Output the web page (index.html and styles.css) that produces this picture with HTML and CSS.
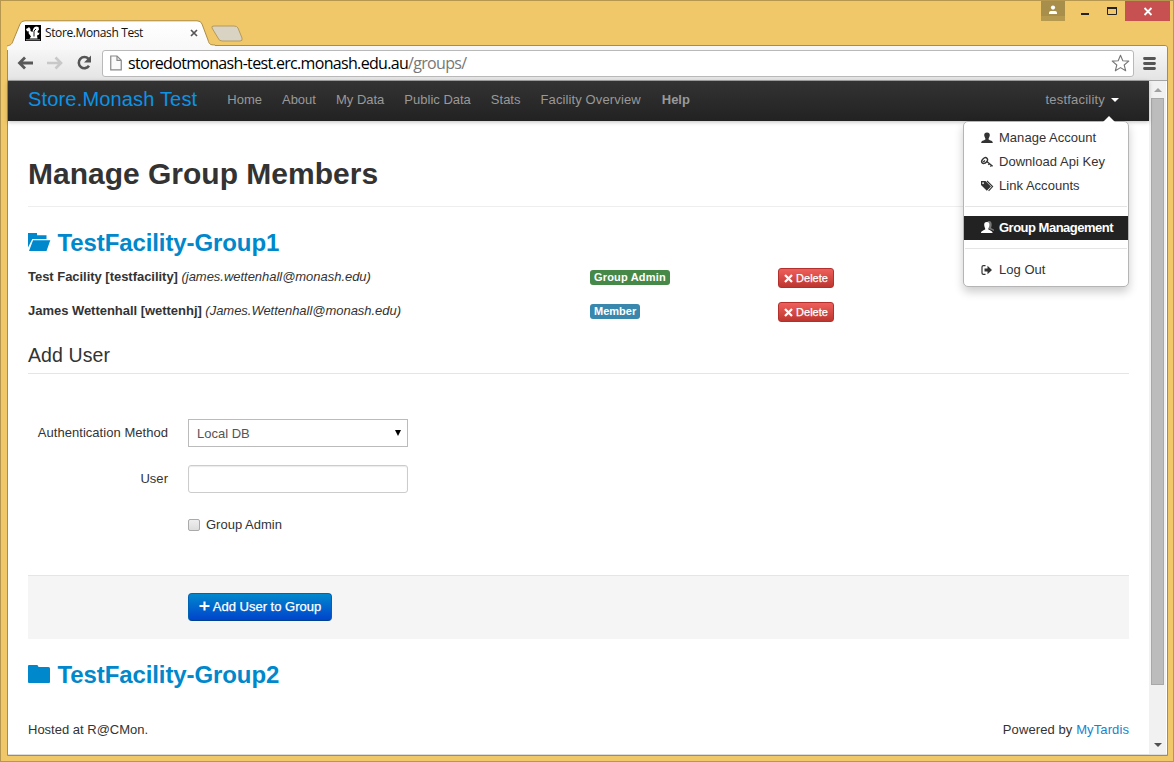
FILE: index.html
```
<!DOCTYPE html>
<html lang="en">
<head>
<meta charset="utf-8">
<title>Store.Monash Test</title>
<link rel="stylesheet" href="styles.css">
</head>
<body>
<div class="window">
  <header class="titlebar">
    <div class="tab">
      <svg class="tab-shape" width="240" height="30" viewBox="0 0 240 30"><defs><linearGradient id="tb" x2="0" y2="1"><stop offset="0" stop-color="#fff"/><stop offset="1" stop-color="#f8f8f8"/></linearGradient></defs><path d="M0 30 V26 C4 25 5 24 6 21 L13 4 Q14 1 18 1 H190 Q194 1 195 4 L201 20 C202 24 203 25 208 25 V30Z" fill="url(#tb)"/><path d="M0 26 C4 25 5 24 6 21 L13 4 Q14 .8 18 .8 H190 Q194 .8 195 4 L201 20 C202 24 203 25 208 25" fill="none" stroke="#ab8d49"/><path d="M207 6 H227 Q230 6 231 8 L235 18 Q236 21 233 21 H215 Q212 21 211 18 L205 8 Q204 6 207 6Z" fill="#d9d3c3" stroke="#b59a5c"/></svg>
      <svg class="favicon" width="16" height="16" viewBox="0 0 16 16"><path d="M0 0H16V16H0Z" fill="#000"/><path d="M1 4 3 3 4 2 5.5 4 5.5 6 7.5 7 8 4.5 9 2.5 11 1.5 13.5 2 14 4.5 12.5 6.5 13 8 14.5 7.5 14 9.5 12 10.5 12.5 13.5H4.5L6 11.5 4.5 9.5 3.5 8 4 6.5 2 6.3Z" fill="#fff"/><path d="M9 11.5V6L11 4" fill="none" stroke="#000" stroke-width=".9"/><path d="M1 14.8H15" stroke="#ccc" stroke-width=".8"/></svg>
      <span class="tab-title">Store.Monash Test</span>
      <svg class="tab-close" width="8" height="8" viewBox="0 0 8 8"><path d="M1 1 7 7M7 1 1 7" stroke="#555" stroke-width="1.7"/></svg>
    </div>
    <div class="controls">
      <span class="profile"><svg width="10" height="10" viewBox="0 0 10 10"><circle cx="5" cy="2.6" r="2.1" fill="#fff"/><path d="M1 9V7.8Q1 6 3 6H7Q9 6 9 7.8V9Z" fill="#fff"/></svg></span>
      <svg class="win-icons" width="60" height="20" viewBox="0 0 60 20"><path d="M16 13H24" stroke="#222" stroke-width="2"/><path d="M42.5 7H51.5V13.5H42.5Z" fill="none" stroke="#222"/><path d="M42 7H52" stroke="#222" stroke-width="2"/></svg>
      <span class="win-close"><svg width="10" height="9" viewBox="0 0 10 9"><path d="M1.5 1 8.5 8M8.5 1 1.5 8" stroke="#fff" stroke-width="1.8"/></svg></span>
    </div>
  </header>

  <div class="frame">
    <div class="toolbar">
      <svg class="tool-icons" width="94" height="35" viewBox="0 0 94 35"><path d="M11.5 17H25M17 11.5 11.5 17 17 22.5" fill="none" stroke="#585858" stroke-width="2.8"/><path d="M39 17H52.5M47.5 11.5 53 17 47.5 22.5" fill="none" stroke="#c8c8c8" stroke-width="2.6"/><path d="M80.5 12.8A5.6 5.6 0 1 0 81 19.8" fill="none" stroke="#555" stroke-width="2.6"/><path d="M83 9.5V16.5H76Z" fill="#555"/></svg>
      <div class="omnibox">
        <svg width="12" height="16" viewBox="0 0 12 16"><path d="M.75 1H7L11.25 5.3V14.9H.75Z" fill="#fafafa" stroke="#888" stroke-width="1.2"/><path d="M7 1V5.3H11" fill="none" stroke="#888" stroke-width="1.2"/></svg>
        <span class="url">storedotmonash-test.erc.monash.edu.au<span class="path">/groups/</span></span>
        <svg class="star" width="19" height="18" viewBox="0 0 19 18"><path d="M9.5 1.2 11.8 6.7 17.8 7.1 13.2 11 14.7 16.8 9.5 13.6 4.3 16.8 5.8 11 1.2 7.1 7.2 6.7Z" fill="#fff" stroke="#777" stroke-width="1.1" stroke-linejoin="round"/></svg>
      </div>
      <svg class="menu-icon" width="13" height="13" viewBox="0 0 13 13"><path d="M1.5 1.5H11.5M1.5 6.5H11.5M1.5 11.5H11.5" stroke="#555" stroke-width="2.8" stroke-linecap="round"/></svg>
    </div>

    <div class="viewport">
      <div class="page">
        <nav class="navbar">
          <a class="brand">Store.Monash Test</a>
          <a>Home</a><a>About</a><a>My Data</a><a>Public Data</a><a>Stats</a><a class="wide">Facility Overview</a><a class="strong">Help</a>
          <div class="account"><span>testfacility</span><i class="caret"></i>
            <div class="dropdown">
              <div class="item"><svg width="14" height="14" viewBox="0 0 14 14"><path d="M7 1.5C5 1.5 4.1 2.8 4.2 4.3 4.3 5.8 5.3 7 5.5 8 5.5 9.5 1.2 9 1.2 12H12.8C12.8 9 8.5 9.5 8.5 8 8.7 7 9.7 5.8 9.8 4.3 9.9 2.8 9 1.5 7 1.5Z" fill="#333"/></svg>Manage Account</div>
              <div class="item"><svg width="14" height="14" viewBox="0 0 14 14"><ellipse cx="4.6" cy="5.6" rx="3.3" ry="2.3" transform="rotate(-45 4.6 5.6)" fill="none" stroke="#333" stroke-width="1.4"/><path d="M3.2 7 5 5.4M6.8 6.5 12.6 11.3M9.3 8.6 8.3 9.8M11.3 10.2 10.3 11.5" fill="none" stroke="#333" stroke-width="1.4"/></svg>Download Api Key</div>
              <div class="item"><svg width="14" height="14" viewBox="0 0 14 14"><path d="M1 2H5.5L11 7.5 6.8 11.8 1 6ZM3 3.2A.9.9 0 1 0 3.1 3.2Z" fill="#333" fill-rule="evenodd"/><path d="M7 2 12.6 7.6 8.6 11.8" fill="none" stroke="#333" stroke-width="1.1"/></svg>Link Accounts</div>
              <div class="divider"></div>
              <div class="item active"><svg width="14" height="14" viewBox="0 0 14 14"><path d="M9 0C7 0 7 2 7.2 4L9 8 14 10V8.5L11 7C12 5 12.4 0 9 0Z" fill="#777"/><path d="M6.8 1C4.8 1 4.1 2.3 4.2 4 4.3 5.6 5.1 7 5.3 8 5.3 9.3 1 9.3 1 12H12.6C12.6 9.3 8.3 9.3 8.3 8 8.5 7 9.3 5.6 9.4 4 9.5 2.3 8.8 1 6.8 1Z" fill="#fff"/></svg>Group Management</div>
              <div class="divider"></div>
              <div class="item"><svg width="14" height="14" viewBox="0 0 14 14"><path d="M5.5 2.6H3.5Q2 2.6 2 4V10Q2 11.4 3.5 11.4H5.5" fill="none" stroke="#333" stroke-width="1.2"/><path d="M4.5 5.5H7.5V2.7L12 7 7.5 11.3V8.5H4.5Z" fill="#333"/></svg>Log Out</div>
            </div>
          </div>
        </nav>
        <main>
          <h1>Manage Group Members</h1>
          <h2><svg width="23" height="20" viewBox="0 0 23 20"><path d="M0 1H9V3.3H18.5V7H4.3L0 15.5Z" fill="#08c"/><path d="M5 8.2H22.3L18.5 19H1Z" fill="#08c"/></svg>TestFacility-Group1</h2>
          <div class="member"><div class="who"><b>Test Facility [testfacility]</b> <i>(james.wettenhall@monash.edu)</i></div><div class="role"><span class="label admin">Group Admin</span></div><button class="delete"><svg width="9" height="9" viewBox="0 0 9 9"><path d="M1 1 8 8M8 1 1 8" stroke="#fff" stroke-width="2.3"/></svg>Delete</button></div>
          <div class="member"><div class="who"><b>James Wettenhall [wettenhj]</b> <i>(James.Wettenhall@monash.edu)</i></div><div class="role"><span class="label">Member</span></div><button class="delete"><svg width="9" height="9" viewBox="0 0 9 9"><path d="M1 1 8 8M8 1 1 8" stroke="#fff" stroke-width="2.3"/></svg>Delete</button></div>
          <h3>Add User</h3>
          <div class="form">
            <div class="field"><label>Authentication Method</label><div class="control select"><span>Local DB</span><svg width="8" height="7" viewBox="0 0 8 7"><path d="M1 0H7L4 6Z" fill="#000"/></svg></div></div>
            <div class="field"><label>User</label><div class="control"></div></div>
            <div class="check"><span class="box"></span>Group Admin</div>
          </div>
          <div class="actions"><button class="primary"><svg width="11" height="11" viewBox="0 0 11 11"><path d="M5.5 .5V9.5M.5 5H10.5" stroke="#fff" stroke-width="2.1"/></svg>Add User to Group</button></div>
          <h2 class="second"><svg width="23" height="20" viewBox="0 0 23 20"><path d="M0 2Q0 1 1 1H9Q10 1 10.5 3H20.5Q22 3 22 4.5V18Q22 19 21 19H1Q0 19 0 18Z" fill="#08c"/></svg>TestFacility-Group2</h2>
        </main>
        <footer><span>Hosted at R@CMon.</span><span class="powered">Powered by <a>MyTardis</a></span></footer>
      </div>
      <div class="scrollbar"><i class="arrow up"></i><div class="thumb"></div><i class="arrow down"></i></div>
    </div>
  </div>
</div>
</body>
</html>
```
FILE: styles.css
```
* { box-sizing: border-box; }
body { margin: 0; color: #333; font: 13px/20px "Liberation Sans", Arial, sans-serif; overflow: hidden; }
svg { display: block; flex: none; }
button { font-family: inherit; margin: 0; }
.window { width: 1174px; height: 762px; background: #f0c869; border: 1px solid #b5974f; padding: 0 5px 5px 6px; display: flex; flex-direction: column; }

.titlebar { height: 44px; display: flex; justify-content: space-between; flex: none; position: relative; z-index: 1; }
.tab { position: relative; width: 240px; height: 30px; margin-top: 19px; display: flex; align-items: center; padding: 0 48px 4px 18px; }
.tab-shape { position: absolute; left: 0; top: 0; }
.favicon, .tab-title, .tab-close { position: relative; }
.tab-title { font: 12px/16px "Open Sans", sans-serif; color: #111; margin-left: 4px; flex: 1; white-space: nowrap; letter-spacing: -.38px; }
.tab-close { margin-right: 1px; }
.controls { display: flex; height: 20px; margin-right: -2px; }
.profile { width: 24px; background: #a88e4b; border-bottom: 5px solid #b5994f; display: flex; justify-content: center; padding-top: 4px; }
.win-close { width: 45px; background: #c75050; display: flex; justify-content: center; padding-top: 6px; }

.frame { flex: 1; min-height: 0; display: flex; flex-direction: column; border: 1px solid #a98c4a; border-radius: 3px 3px 0 0; background: #fff; }
.toolbar { height: 35px; flex: none; background: linear-gradient(#f8f8f8, #e4e4e4); border-bottom: 1px solid #a5a5a5; display: flex; align-items: center; border-radius: 3px 3px 0 0; }
.omnibox { flex: 1; height: 27px; background: #fff; border: 1px solid #b9b9b9; border-radius: 3px; display: flex; align-items: center; padding: 0 3px 0 7px; }
.url { font: 16px/22px "Open Sans", sans-serif; color: #000; margin-left: 6px; flex: 1; white-space: nowrap; letter-spacing: -.68px; padding-bottom: 1px; }
.path { color: #777; }
.menu-icon { margin: 0 11px 0 9px; }

.viewport { flex: 1; min-height: 0; display: flex; padding-right: 1px; border-bottom: 1px solid #ddd; }
.page { flex: 1; background: #fff; }
.navbar { height: 40px; background: linear-gradient(#333, #222); box-shadow: 0 1px 4px rgba(0,0,0,.25); display: flex; align-items: center; padding: 0 20px; color: #999; position: relative; }
.navbar > a { padding: 0 10px 2px; white-space: nowrap; }
.navbar > .brand { font-size: 20px; color: #0d93e6; padding: 0 20px 4px 0; letter-spacing: .17px; }
.navbar > .wide { letter-spacing: .12px; }
.navbar > .strong { font-weight: bold; margin-left: 1px; }
.account { margin-left: auto; margin-right: 10px; padding-bottom: 2px; position: relative; display: flex; align-items: center; gap: 6px; letter-spacing: .2px; }
.caret { border: 4px solid transparent; border-top-color: #fff; border-bottom: 0; }
.dropdown { position: absolute; top: 31px; right: -10px; width: 166px; height: 166px; background: #fff; border: 1px solid #b5b5b5; border-radius: 5px; box-shadow: 0 5px 10px rgba(0,0,0,.2); padding: 4px 0; color: #333; letter-spacing: .03px; }
.dropdown::before { content: ""; position: absolute; right: 13px; top: -6px; border: 6px solid transparent; border-top: 0; border-bottom-color: #fff; }
.item { height: 24px; display: flex; align-items: center; padding-left: 16px; gap: 5px; white-space: nowrap; }
.item.active { background: #222; color: #fff; font-weight: bold; letter-spacing: -.5px; }
.divider { height: 1px; margin: 8px 1px 9px; background: #e5e5e5; }

main { padding: 30px 20px 0; }
h1 { margin: 0 0 16px; padding-bottom: 10px; height: 56px; border-bottom: 1px solid #eee; font-size: 30px; line-height: 45px; }
h2 { margin: 0; height: 40px; font-size: 24px; line-height: 40px; color: #08c; display: flex; align-items: center; gap: 6.5px; letter-spacing: -.1px; }
h2 svg { position: relative; top: -1px; }
.member { display: flex; height: 34px; }
.member .who { width: 562px; padding-top: 4px; letter-spacing: -.03px; }
.role { width: 188px; padding-top: 7px; }
.label { display: inline-block; background: #3a87ad; color: #fff; font-weight: bold; font-size: 11px; line-height: 15px; height: 15px; border-radius: 3px; padding: 0 4px; vertical-align: top; }
.admin { background: #468847; letter-spacing: .18px; }
.delete { width: 56px; height: 20px; margin-top: 5px; border: 1px solid #b3302c; border-radius: 3px; background: linear-gradient(#ee5f5b, #bd362f); color: #fff; font-size: 11px; display: flex; align-items: center; justify-content: center; gap: 3px; padding: 0; -webkit-text-stroke: .25px #fff; }
h3 { margin: 0; height: 43px; border-bottom: 1px solid #e5e5e5; font-weight: normal; font-size: 19.5px; line-height: 20px; padding-top: 14px; letter-spacing: .1px; }
.form { padding-top: 45px; height: 201px; }
.field { display: flex; height: 46px; }
.field label { width: 140px; text-align: right; margin-right: 20px; padding-top: 4px; letter-spacing: .04px; }
.control { width: 220px; height: 28px; border: 1px solid #ccc; border-radius: 3px; background: #fff; box-shadow: inset 0 1px 1px rgba(0,0,0,.08); }
.select { border-color: #bbb; border-radius: 0; box-shadow: none; display: flex; align-items: center; justify-content: space-between; padding: 1px 5px 0 8px; color: #555; }
.check { padding-left: 160px; padding-top: 4px; display: flex; align-items: center; gap: 6px; }
.box { width: 12px; height: 12px; border: 1px solid #aaa; border-radius: 2px; background: linear-gradient(#eee, #ddd); }
.actions { height: 64px; background: #f5f5f5; border-top: 1px solid #e5e5e5; padding: 17px 0 0 160px; }
.primary { width: 144px; height: 28px; border: 1px solid #0062b3; border-bottom-color: #004090; border-radius: 4px; background: linear-gradient(#08c, #04c); color: #fff; font-size: 13px; display: flex; align-items: center; justify-content: center; gap: 3px; padding: 0 0 1px; -webkit-text-stroke: .25px #fff; }
.second { margin-top: 16px; }
footer { display: flex; justify-content: space-between; padding: 25px 20px 0; }
footer a { color: #1b82cc; }
.powered { letter-spacing: .1px; }
.scrollbar { width: 17px; background: #f1f1f1; display: flex; flex-direction: column; align-items: center; }
.arrow { border: 4px solid transparent; flex: none; }
.up { border-top: 0; border-bottom-color: #a0a0a0; margin: 7px 0 6px; }
.thumb { width: 13px; height: 587px; background: #bcbcbc; border: 1px solid #a8a8a8; }
.down { border-bottom: 0; border-top-color: #505050; margin-top: auto; margin-bottom: 7px; }
```
